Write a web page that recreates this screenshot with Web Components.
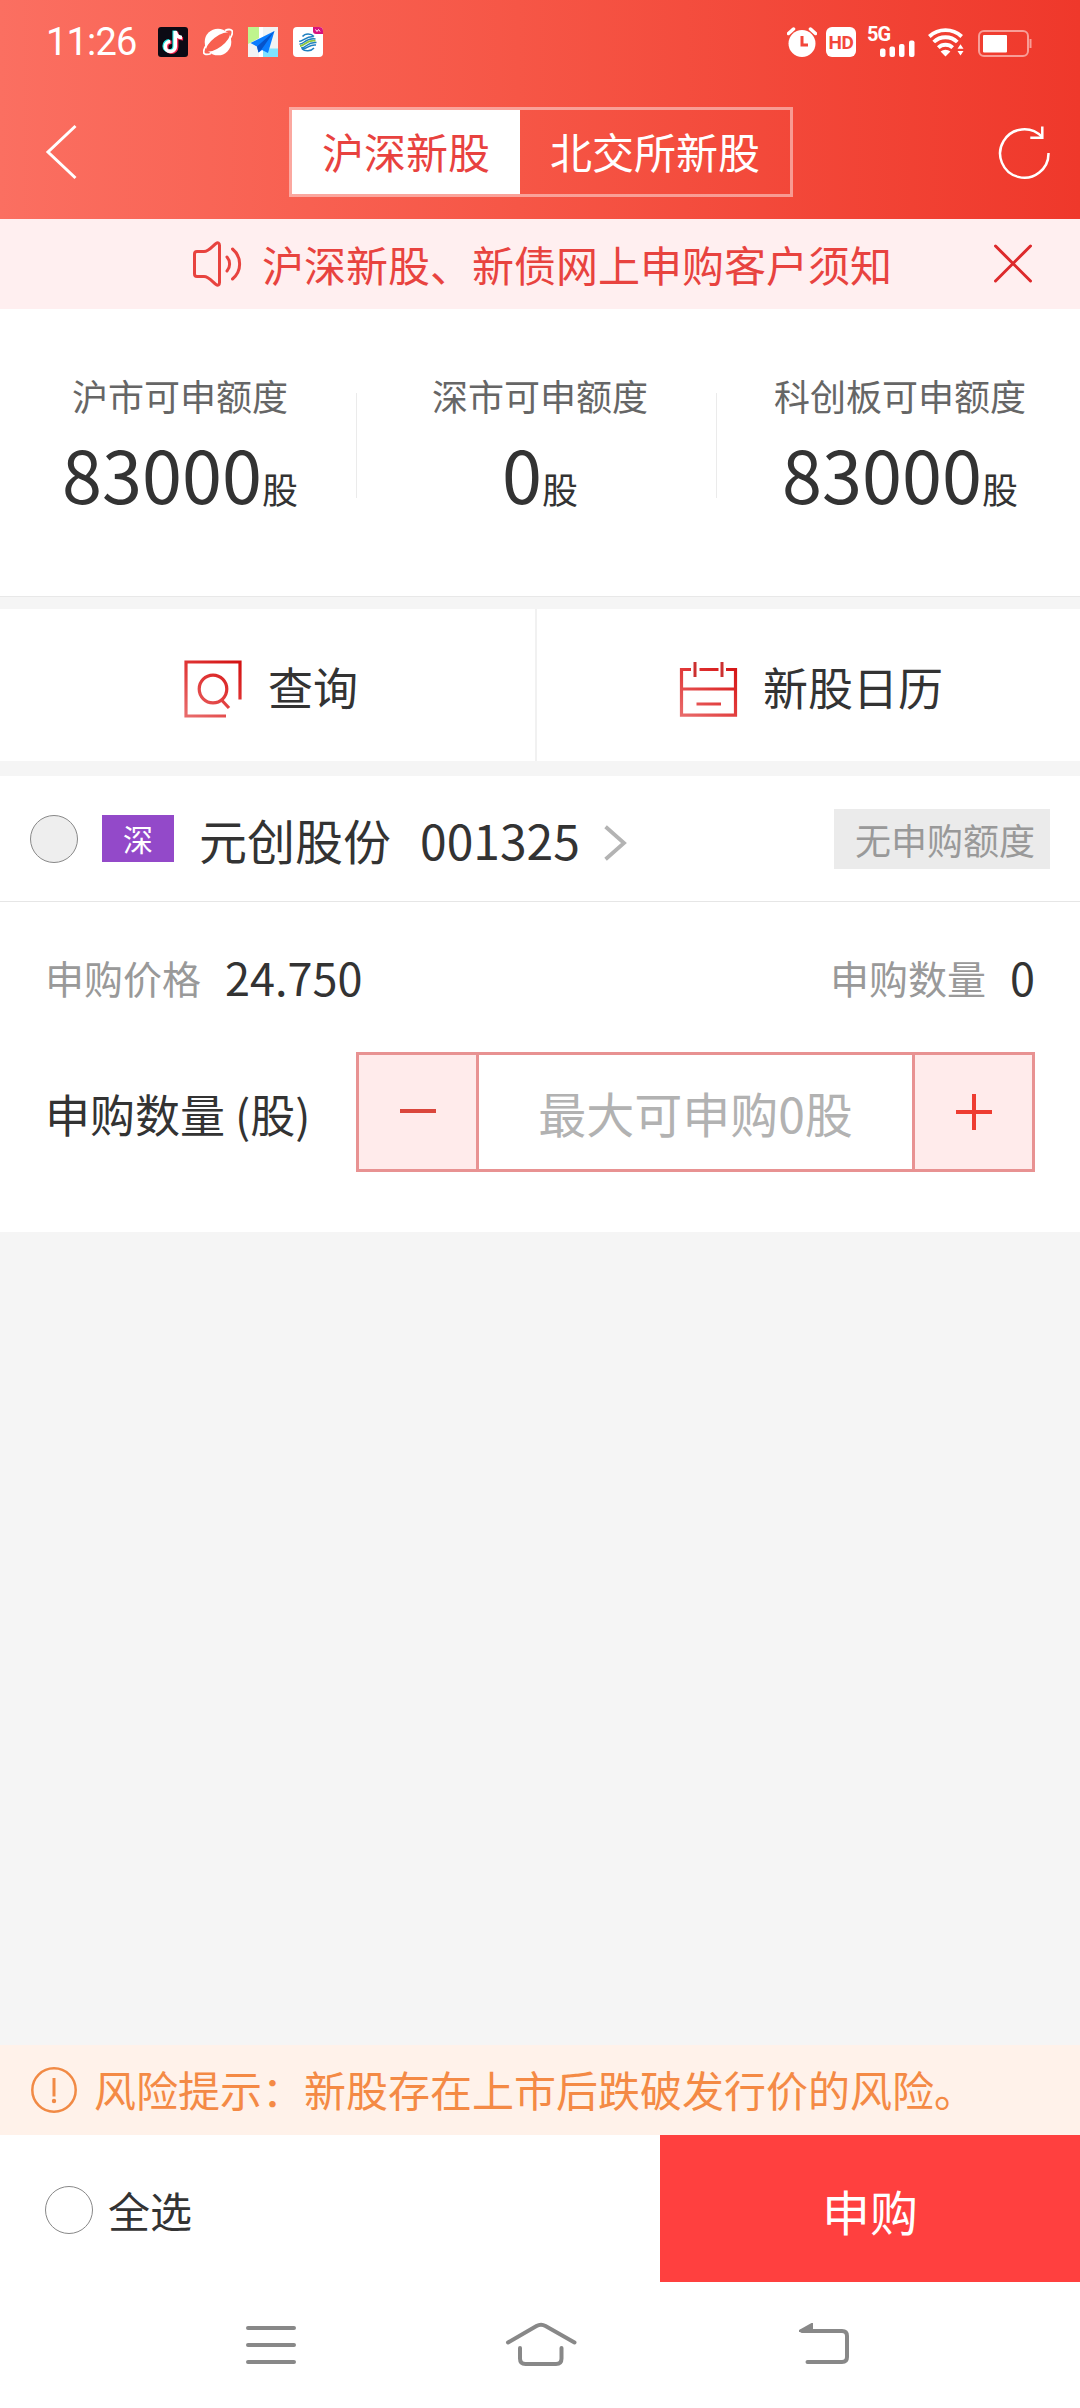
<!DOCTYPE html>
<html lang="zh-CN">
<head>
<meta charset="utf-8">
<title>新股申购</title>
<style>
html,body{margin:0;padding:0}
body{width:1080px;background:#fff;font-family:"Noto Sans CJK SC","Noto Sans",sans-serif;color:#333}
</style>
</head>
<body>
<ipo-app></ipo-app>
<script>
const define = (name, html) => {
  const t = document.createElement('template');
  t.innerHTML = html;
  customElements.define(name, class extends HTMLElement {
    constructor() {
      super();
      this.attachShadow({mode: 'open'}).append(t.content.cloneNode(true));
    }
  });
};

define('status-bar', `
<style>
:host{display:flex;height:55px;padding:27px 48px 0 46px;box-sizing:border-box;align-items:flex-start;justify-content:space-between;color:#fff}
.l,.r{display:flex;height:30px;align-items:center}
.time{font:400 38px/31px Roboto,sans-serif;width:112px;white-space:nowrap;letter-spacing:-.8px}
.l svg{margin-right:15px}
svg{display:block;flex:none}
.hd{width:30px;height:30px;border-radius:6px;background:#fff;color:#f3473a;font:700 19px/31px Roboto,sans-serif;letter-spacing:-.5px;text-align:center;margin:0 11px 0 9px}
.sig{display:flex;height:30px;width:48px}
.sig span{font:700 20px/17px Roboto,sans-serif;width:12px;letter-spacing:-1px;white-space:nowrap;margin-top:-1px}
</style>
<div class="l">
  <span class="time">11:26</span>
  <svg width="30" height="30" viewBox="0 0 30 30"><rect width="30" height="30" rx="3" fill="#0c0a14"/>
    <g fill="none" stroke-width="3.6"><path d="M17 4v15.500a5 5 0 1 1-5-5M17 5c.5 4 3 6 6.500 6" stroke="#25e8e4" transform="translate(-.8 -.6)"/><path d="M18 4v15.500a5 5 0 1 1-5-5M18 5c.5 4 3 6 6.500 6" stroke="#fb2b56" transform="translate(.6 .8)"/><path d="M17.300 4v15.500a5 5 0 1 1-5-5M17.300 4c.5 4 3 6.500 6.700 6.500" stroke="#fff"/></g></svg>
  <svg width="30" height="30" viewBox="0 0 30 30"><circle cx="15" cy="15" r="13.300" fill="#fff"/><path d="M22 3.500c4-1.800 7.500-1 7.400 1.700 0 2.500-1.300 5-3.600 8M8 26.500c-4 1.700-7.600 1-7.400-1.700.2-2.500 1.400-4.800 3.400-7.500" stroke="#fff" stroke-width="1.800" fill="none"/><ellipse cx="15" cy="15" rx="14" ry="5.400" transform="rotate(-37 15 15)" fill="#f8604f"/></svg>
  <svg width="30" height="30" viewBox="0 0 30 30"><rect width="30" height="30" fill="#f1f3f4"/><path d="M0 0h11v11L0 17z" fill="#bff58d"/><path d="M15 21.500h15V30H15z" fill="#7fe3ff"/><path d="M11 0h4v30h-4z" fill="#fff"/><path d="M26.500 4L2.500 16l6.500 3.500 1.500 6 3.500-2.500 6 3z" fill="#0a7dff"/><path d="M26.500 4L9 19.500l1.500 6 3.200-3.300z" fill="#0753c9"/></svg>
  <svg width="30" height="30" viewBox="0 0 30 30"><rect width="30" height="30" rx="4" fill="#fff"/><path d="M20 0h6a4 4 0 0 1 4 4v3h-7a3 3 0 0 1-3-3z" fill="#d8127d"/><path d="M22.500 2.500l1.500 2 1.500-2 1.500 2" stroke="#fff" fill="none"/><g fill="none" stroke-width="1.500"><path d="M9.500 9.500C12 6 18 6 21 9.500M6.300 14c3 1.500 6-5 14.700-4.500M6.500 17c4 1 6-6.500 16-5M8 21c6 0 6-6.500 15.500-5.500M9 22c6 0 7-5 14-4M21 21C18 24.500 12 24.500 9 22" stroke="#1f80c0"/><path d="M7 19c5 0 6-6.500 15.500-5.200" stroke="#8cc63f" stroke-width="1.800"/></g></svg>
</div>
<div class="r">
  <svg width="30" height="30" viewBox="0 0 30 30"><circle cx="15" cy="16.500" r="13.500" fill="#fff"/><path d="M1.500 6.500l5-4.500M28.500 6.500l-5-4.500" stroke="#fff" stroke-width="3.500" stroke-linecap="round"/><path d="M15 9v9h6" fill="none" stroke="#f2463a" stroke-width="3"/></svg>
  <div class="hd">HD</div>
  <div class="sig"><span>5G</span><svg width="36" height="30" viewBox="0 0 36 30" fill="#fff"><rect x="1" y="21.500" width="5.500" height="8.500" rx="2"/><rect x="10.500" y="19.500" width="5.500" height="10.500" rx="2"/><rect x="20" y="17" width="5.500" height="13" rx="2"/><rect x="30" y="13.500" width="5.500" height="16.500" rx="2"/></svg></div>
  <svg style="margin:0 14px 0 13px" width="36" height="30" viewBox="0 0 36 30"><g fill="none" stroke="#fff" stroke-width="3.800"><path d="M1.300 9.500a24 24 0 0 1 32.400 0M5.700 15a17 17 0 0 1 23.600 0M10.300 20.600a10.500 10.500 0 0 1 14.400 0"/></g><path d="M12.600 24.500a7.500 7.500 0 0 1 9.800 0l-4.900 5z" fill="#fff"/><path d="M29.500 21.700l3-4.500 3 4.500zM29.500 24l3 4.500 3-4.500z" fill="#fff"/></svg>
  <svg width="54" height="30" viewBox="0 0 54 30"><rect x="1" y="4" width="49" height="25" rx="5" fill="none" stroke="#fff" stroke-opacity=".5" stroke-width="2"/><rect x="5" y="8" width="24" height="17.500" rx="1" fill="#fff"/><rect x="51.500" y="12" width="2" height="9" fill="#fff" fill-opacity=".5"/></svg>
</div>`);

define('tab-switch', `
<style>:host{display:flex;border:3px solid rgba(255,255,255,.45);height:84px}</style><slot></slot>`);
define('tab-item', `
<style>:host{display:block;padding:0 30px;font-size:42px;line-height:82px;color:#fff;white-space:nowrap}
:host([active]){background:#fff;color:#e8423f;height:84px}</style><slot></slot>`);

define('app-header', `
<style>
:host{display:block;height:219px;background:linear-gradient(90deg,#fb6f61,#f65646 48%,#ef382b)}
.nav{display:flex;align-items:center;justify-content:space-between;margin-top:52px;height:90px;padding:0 28px 0 45px}
svg{display:block}
</style>
<status-bar></status-bar>
<div class="nav">
  <svg width="34" height="56" viewBox="0 0 34 56"><path d="M30.500 2L3 28 30.500 54" fill="none" stroke="#fff" stroke-width="3"/></svg>
  <tab-switch style="margin-left:210px;margin-right:auto"><tab-item active>沪深新股</tab-item><tab-item>北交所新股</tab-item></tab-switch>
  <svg width="54" height="56" viewBox="0 0 54 56"><path d="M50.500 29a24.200 24.200 0 1 1-6.500-16" fill="none" stroke="#fff" stroke-width="2.500"/><path d="M44.300 2.500v11.200h-12" fill="none" stroke="#fff" stroke-width="2.500"/></svg>
</div>`);

define('notice-bar', `
<style>
:host{display:flex;align-items:center;height:90px;background:#ffeff0;color:#e8433f;font-size:42px;line-height:60px;padding:0 46px 0 191px}
svg{display:block;flex:none}span{margin-left:19px;margin-right:auto;white-space:nowrap}
</style>
<svg width="52" height="50" viewBox="0 0 52 50" fill="none" stroke="#e8433f" stroke-width="3" stroke-linecap="round" stroke-linejoin="round"><path d="M6 12.500h7c5 0 9-6 12-8 2-1.300 3.500-.5 3.500 2v37c0 2.500-1.500 3.300-3.500 2-3-2-7-8-12-8H6q-2.500 0-2.500-2.500V15q0-2.500 2.500-2.500zM36 18c3.500 4 3.500 10 0 14M41.500 10c9.500 8 9.500 22 0 30"/></svg>
<span><slot></slot></span>
<svg width="41" height="40" viewBox="0 0 41 40"><path d="M2.500 2l35 35M37.500 2L2.500 37" stroke="#dd2a2c" stroke-width="3" stroke-linecap="round"/></svg>`);

define('quota-cell', `
<style>
:host{display:block;width:360px;text-align:center;white-space:nowrap}
.t{font-size:36px;line-height:52px;color:#666}
.v{font-size:36px;line-height:104px;height:104px}
b{font-weight:400;font-size:72px}
</style>
<div class="t"><slot name="title"></slot></div><div class="v"><b><slot></slot></b>股</div>`);
define('quota-panel', `
<style>
:host{display:flex;height:287px;padding-top:60px;box-sizing:border-box;background:#fff;align-items:flex-start}
i{width:1.500px;height:105px;margin:24px 3px 0 -4.500px;background:#ebebeb}
</style>
<quota-cell><span slot="title">沪市可申额度</span>83000</quota-cell><i></i>
<quota-cell><span slot="title">深市可申额度</span>0</quota-cell><i></i>
<quota-cell><span slot="title">科创板可申额度</span>83000</quota-cell>`);

define('tool-bar', `
<style>
:host{display:flex;height:152px;background:#fff}
div{display:flex;align-items:center;box-sizing:border-box;font-size:45px;line-height:66px;padding-top:4px}
.a{width:537px;padding-left:184px;border-right:2px solid #f1f1f1}
.b{padding-left:141px}
svg{display:block;flex:none;margin-top:3px}
.a span{margin-left:26px}.b span{margin-left:25px}
</style>
<div class="a"><svg width="58" height="58" viewBox="0 0 58 58"><defs><linearGradient id="g" gradientUnits="userSpaceOnUse" x1="8" y1="58" x2="52" y2="0"><stop stop-color="#e86a6a"/><stop offset=".55" stop-color="#e03535"/><stop offset="1" stop-color="#d31212"/></linearGradient></defs><g fill="none" stroke="url(#g)" stroke-width="3.200"><path d="M56 39.500V2H2v54h40"/><circle cx="29" cy="29" r="13.800"/><path d="M38 40.500l7 7.500"/></g></svg><span>查询</span></div>
<div class="b"><svg width="60" height="58" viewBox="0 0 60 58"><defs><linearGradient id="g" gradientUnits="userSpaceOnUse" x1="8" y1="60" x2="48" y2="8"><stop stop-color="#ee6a6a"/><stop offset="1" stop-color="#dc1818"/></linearGradient></defs><g fill="none" stroke="url(#g)" stroke-width="3.200"><path d="M13 9.500H3.500v45.600h54V9.500H48M21.500 9.500h19M5 29h51M18.500 44h24.500"/></g><path d="M17 2v15M44 2v15" stroke="#cc3030" stroke-width="3"/></svg><span>新股日历</span></div>`);

define('round-check', `
<style>:host{display:block;flex:none;box-sizing:border-box;width:48px;height:48px;border:1px solid #888;border-radius:50%;background:#fff}
:host([disabled]){background:#eee}</style>`);

define('stock-head', `
<style>
:host{display:flex;align-items:center;box-sizing:border-box;height:126px;padding:0 30px;border-bottom:1px solid #e6e6e6;background:#fff;white-space:nowrap}
.m{width:72px;height:47px;line-height:46px;margin-left:24px;background:#9349c9;color:#fff;font-size:30px;text-align:center}
.n{font-size:48px;line-height:70px;margin-left:25px}
.c{font-size:48px;line-height:70px;margin-left:29px}
svg{display:block;margin-left:24px;margin-top:8px}
.tag{margin-left:auto;background:#ebebeb;color:#999;font-size:36px;width:216px;height:60px;line-height:60px;box-sizing:border-box;padding-left:21px}
</style>
<round-check disabled></round-check><span class="m">深</span><span class="n">元创股份</span><span class="c">001325</span>
<svg width="26" height="36" viewBox="0 0 26 36"><path d="M3 3l17 15L3 33" fill="none" stroke="#b3b3b3" stroke-width="3.800" stroke-linecap="square"/></svg>
<span class="tag">无申购额度</span>`);

define('labelled-value', `
<style>:host{display:flex;gap:24px;font-size:45px;line-height:60px;align-items:center}
span{font-size:39px;color:#999}</style><span><slot name="label"></slot></span><div><slot></slot></div>`);

define('qty-stepper', `
<style>
:host{display:flex;box-sizing:border-box;width:679px;height:120px;border:3px solid #e89292}
div{width:117px;background:#ffebeb;display:flex;align-items:center;justify-content:center;box-sizing:content-box}
.m{border-right:3px solid #e89292}.p{border-left:3px solid #e89292}
span{flex:1;text-align:center;font-size:48px;line-height:115px;color:#b2b2b2;white-space:nowrap}
svg{display:block}
</style>
<div class="m"><svg width="36" height="36" viewBox="0 0 36 36"><path d="M0 17h36" stroke="#da463c" stroke-width="4"/></svg></div>
<span><slot></slot></span>
<div class="p"><svg width="36" height="36" viewBox="0 0 36 36"><path d="M0 18h36M18 0v36" stroke="#ee3c31" stroke-width="4"/></svg></div>`);

define('stock-detail', `
<style>
:host{display:block;box-sizing:border-box;height:330px;padding:45px 45px 0;background:#fff}
.r{display:flex;justify-content:space-between;align-items:center}
.q{margin-top:45px}.q>span{font-size:45px;line-height:66px;white-space:nowrap;padding-top:3px}
</style>
<div class="r"><labelled-value><span slot="label">申购价格</span>24.750</labelled-value><labelled-value><span slot="label">申购数量</span>0</labelled-value></div>
<div class="r q"><span>申购数量 (股)</span><qty-stepper>最大可申购0股</qty-stepper></div>`);

define('risk-tip', `
<style>:host{display:flex;align-items:center;height:90px;background:#fff2ea;color:#f48a45;font-size:42px;line-height:60px;padding-left:30px;white-space:nowrap}
svg{display:block;flex:none;margin-right:16px}span{margin-top:-3px}</style>
<svg width="48" height="48" viewBox="0 0 48 48"><circle cx="24" cy="24" r="21.700" fill="none" stroke="#f18a45" stroke-width="2.500"/><path d="M24 12v18.500" stroke="#f18a45" stroke-width="3"/><circle cx="24" cy="35" r="2.200" fill="#f18a45"/></svg><span><slot></slot></span>`);

define('action-bar', `
<style>
:host{display:flex;height:147px;background:#fff}
.all{display:flex;align-items:center;flex:1;padding:3px 0 0 45px;gap:15px;font-size:42px;line-height:60px}
.buy{width:420px;background:#ff403f;color:#fff;font-size:48px;line-height:150px;text-align:center}
</style>
<div class="all"><round-check></round-check><span>全选</span></div><div class="buy">申购</div>`);

define('system-nav', `
<style>:host{display:flex;height:126px;background:#fff;padding-left:244px}svg{display:block;margin-top:36px;flex:none}</style>
<svg width="54" height="54" viewBox="0 0 54 54"><path d="M4 10h46M4 27h46M4 44h46" stroke="#888" stroke-width="4" stroke-linecap="round"/></svg>
<svg style="margin-left:206px" width="74" height="54" viewBox="0 0 74 54" fill="none" stroke="#888" stroke-width="4" stroke-linecap="round"><path d="M4 24.500L32.500 8q4.500-2.500 9 0L70.500 24.500M16 30v10.500q0 5.500 5.500 5.500h30.500q5.500 0 5.500-5.500V30"/></svg>
<svg style="margin-left:218px" width="56" height="54" viewBox="0 0 56 54"><path d="M6 13h40q5 0 5 5v21q0 5-5 5H11.500" fill="none" stroke="#888" stroke-width="4" stroke-linecap="round"/><path d="M3 12L15.500 5h1.500v9H3z" fill="#888"/></svg>`);

define('ipo-app', `
<style>
:host{display:flex;flex-direction:column;width:1080px;height:2408px;background:#f5f5f5}
.g1{height:12px;border-top:1px solid #e8e8e8}.g2{height:15px}.f{flex:1}
</style>
<app-header></app-header>
<notice-bar>沪深新股、新债网上申购客户须知</notice-bar>
<quota-panel></quota-panel><div class="g1"></div>
<tool-bar></tool-bar><div class="g2"></div>
<stock-head></stock-head><stock-detail></stock-detail>
<div class="f"></div>
<risk-tip>风险提示：新股存在上市后跌破发行价的风险。</risk-tip>
<action-bar></action-bar><system-nav></system-nav>`);
</script>
</body>
</html>
